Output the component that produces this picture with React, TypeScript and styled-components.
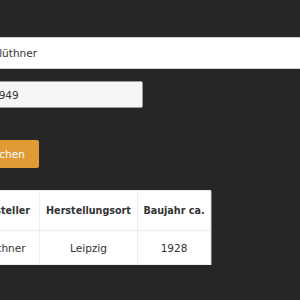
import React from "react";
import styled, { createGlobalStyle } from "styled-components";

const Global = createGlobalStyle`
  html, body { margin: 0; padding: 0; background: #262626; overflow: hidden; }
  body { font-family: "DejaVu Sans", "Open Sans", sans-serif; }
`;

const Page = styled.div`
  display: flex;
  flex-direction: column;
  align-items: flex-start;
  padding-top: 37px;
  margin-left: -20px;
  width: 400px;
`;

const TextInput = styled.input<{ $w: number; $h: number; $bg: string; $border: string; $mt: number }>`
  box-sizing: border-box;
  margin-top: ${(p) => p.$mt}px;
  width: ${(p) => p.$w}px;
  height: ${(p) => p.$h}px;
  background: ${(p) => p.$bg};
  border: 1px solid ${(p) => p.$border};
  border-radius: 2px;
  padding: 0 11px;
  font-family: "DejaVu Sans", sans-serif;
  font-size: 10.5px;
  color: #333;
  outline: none;
`;

const Button = styled.button`
  box-sizing: border-box;
  margin-top: 32px;
  margin-left: -8px;
  height: 28px;
  width: 67px;
  padding: 0 0 0 14px;
  text-align: left;
  background: #e09b37;
  border: none;
  border-radius: 2px;
  color: #fff;
  font-family: "DejaVu Sans", sans-serif;
  font-size: 10.5px;
`;

const Table = styled.table`
  margin-top: 22px;
  margin-left: -27px;
  width: 257px;
  table-layout: fixed;
  border-collapse: collapse;
  background: #fff;
  box-shadow: 1px 1px 0 #777;
  font-family: "DejaVu Sans", sans-serif;
  color: #333;
`;

const Th = styled.th<{ $w: number; $pl?: number }>`
  width: ${(p) => p.$w}px;
  box-sizing: border-box;
  height: 40px;
  padding: 0 4px 0 ${(p) => p.$pl ?? 4}px;
  font-size: 9.6px;
  font-weight: bold;
  text-align: center;
  border: 1px solid #ececec;
  white-space: nowrap;
`;

const Td = styled.td<{ $pl?: number }>`
  height: 33px;
  padding: 0 4px 0 ${(p) => p.$pl ?? 4}px;
  font-size: 10.5px;
  text-align: center;
  border: 1px solid #ececec;
  white-space: nowrap;
`;

export default function App() {
  return (
    <>
      <Global />
      <Page>
        <TextInput $mt={0} $w={360} $h={32} $bg="#fff" $border="#cfcfcf" defaultValue="Blüthner" />
        <TextInput $mt={12} $w={163} $h={27} $bg="#f6f6f6" $border="#9a9a9a" defaultValue="1949" />
        <Button>Suchen</Button>
        <Table>
          <thead>
            <tr>
              <Th $w={86} $pl={17}>Hersteller</Th>
              <Th $w={98}>Herstellungsort</Th>
              <Th $w={73}>Baujahr ca.</Th>
            </tr>
          </thead>
          <tbody>
            <tr>
              <Td $pl={17}>Blüthner</Td>
              <Td>Leipzig</Td>
              <Td>1928</Td>
            </tr>
          </tbody>
        </Table>
      </Page>
    </>
  );
}
